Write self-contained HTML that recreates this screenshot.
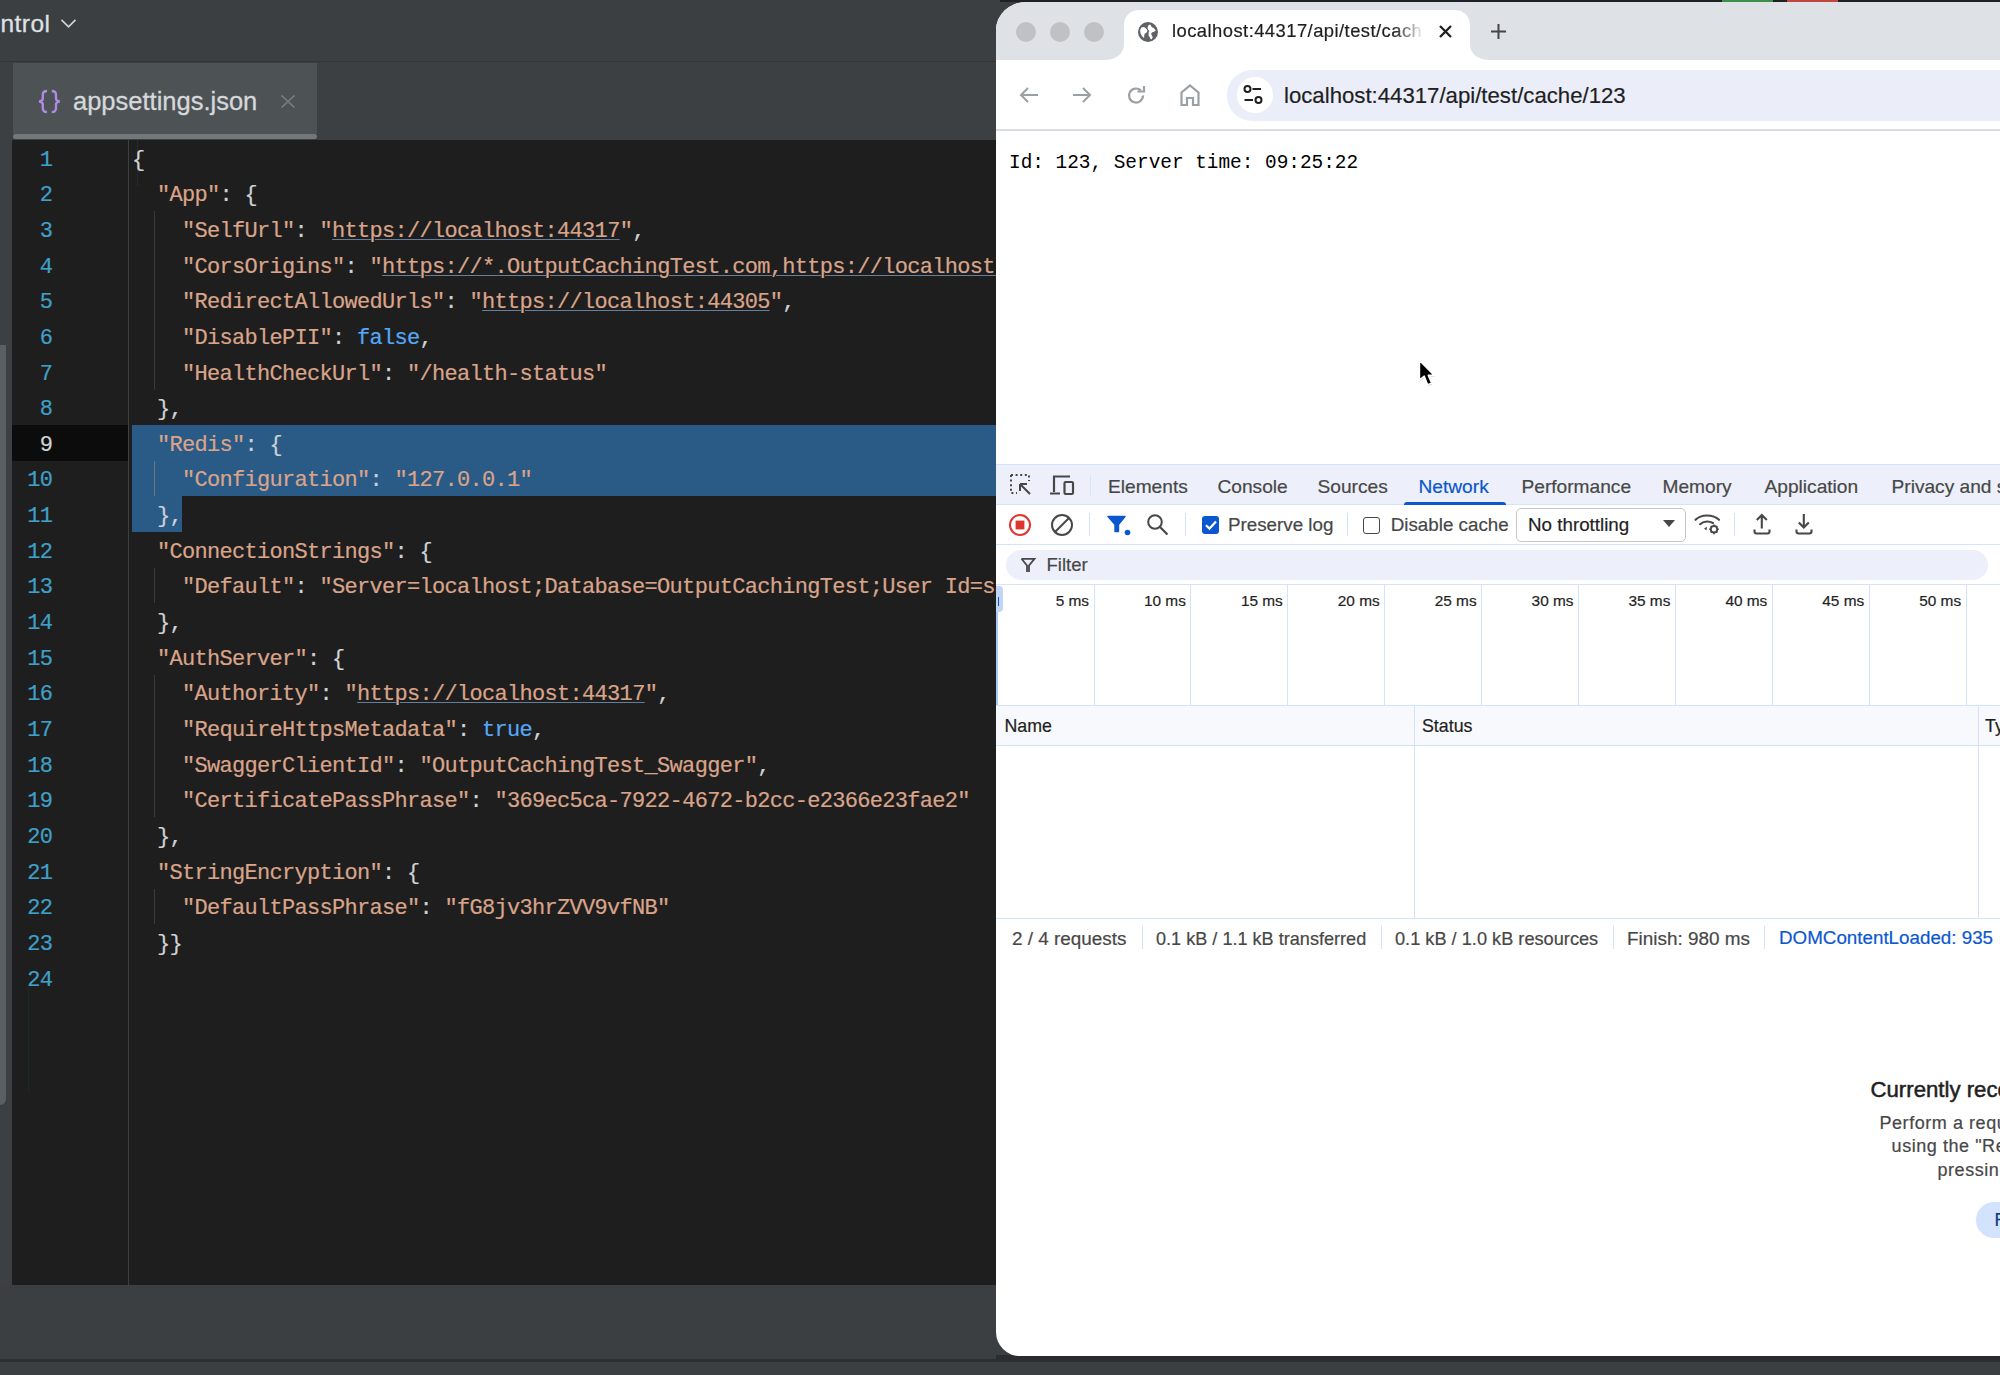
<!DOCTYPE html>
<html><head><meta charset="utf-8"><style>
*{margin:0;padding:0;box-sizing:border-box}
html,body{width:2000px;height:1375px;overflow:hidden;background:#3c3f41;position:relative;font-family:"Liberation Sans",sans-serif}
.a{position:absolute}
svg.a{overflow:visible}
.s{color:#d9a48a}
.u{text-decoration:underline;text-decoration-color:#62809e;text-decoration-thickness:1px;text-underline-offset:2px}
.k{color:#56a8f5}
</style></head><body>
<div class="a" style="left:0px;top:0px;width:1000px;height:61px;background:#3c3f41;"></div>
<div class="a" style="left:0px;top:61px;width:1000px;height:1px;background:#323436;"></div>
<div class="a" style="left:0.5px;top:8.31px;font-size:24.5px;line-height:32px;color:#dfe1e5;font-family:'Liberation Sans',sans-serif;white-space:pre;letter-spacing:0.45px;-webkit-text-stroke:0.3px #dfe1e5">ntrol</div>
<svg class="a" style="left:60px;top:18px" width="18" height="12"><path d="M1.5 1.8 L8.5 8.8 L15.5 1.8" fill="none" stroke="#cfd1d4" stroke-width="1.7"/></svg>
<div class="a" style="left:0px;top:62px;width:1000px;height:78px;background:#3d4042;"></div>
<div class="a" style="left:13px;top:63px;width:304px;height:71px;background:#4d5255;"></div>
<div class="a" style="left:13px;top:134px;width:304px;height:5px;background:#737779;border-radius:3px"></div>
<svg class="a" style="left:37px;top:89px" width="25" height="25" viewBox="0 0 25 25"><path d="M10 2 C6.8 2 5.8 3.2 5.8 5.8 L5.8 9.5 C5.8 11.3 4.6 12.3 2 12.5 C4.6 12.7 5.8 13.7 5.8 15.5 L5.8 19.2 C5.8 21.8 6.8 23 10 23 M14.8 2 C18 2 19 3.2 19 5.8 L19 9.5 C19 11.3 20.2 12.3 22.8 12.5 C20.2 12.7 19 13.7 19 15.5 L19 19.2 C19 21.8 18 23 14.8 23" fill="none" stroke="#b08ae6" stroke-width="2.3"/></svg>
<div class="a" style="left:73px;top:84.66px;font-size:25.5px;line-height:33px;color:#d6d8db;font-family:'Liberation Sans',sans-serif;white-space:pre;-webkit-text-stroke:0.3px #d6d8db">appsettings.json</div>
<svg class="a" style="left:280px;top:94px" width="16" height="15"><path d="M1.5 1.5 L14.5 13.5 M14.5 1.5 L1.5 13.5" stroke="#7d8184" stroke-width="1.5"/></svg>
<div class="a" style="left:0px;top:140px;width:12px;height:1145px;background:#3d4042;"></div>
<div class="a" style="left:0px;top:345px;width:6px;height:760px;background:#5b5e62;border-radius:0 0 6px 0"></div>
<div class="a" style="left:12px;top:140px;width:988px;height:1145px;background:#1e1e1e;"></div>
<div class="a" style="left:128px;top:140px;width:1px;height:1145px;background:#3e3f41;"></div>
<div class="a" style="left:12px;top:425.2px;width:116px;height:35.65px;background:#0c0c0d;"></div>
<div class="a" style="left:132px;top:425.2px;width:868px;height:71.3px;background:#295b86;"></div>
<div class="a" style="left:132px;top:495.5px;width:50px;height:36.65px;background:#295b86;"></div>
<div class="a" style="left:28px;top:987px;width:1px;height:106px;background:#1c282c;"></div>
<div class="a" style="left:137px;top:140.0px;width:1px;height:46.345px;background:#28292b;"></div>
<div class="a" style="left:154px;top:211.3px;width:1px;height:178.24999999999994px;background:#3a3b3d;"></div>
<div class="a" style="left:154px;top:460.84999999999997px;width:1px;height:35.650000000000034px;background:#6a7580;"></div>
<div class="a" style="left:154px;top:567.8px;width:1px;height:35.65000000000009px;background:#3a3b3d;"></div>
<div class="a" style="left:154px;top:674.75px;width:1px;height:142.60000000000002px;background:#3a3b3d;"></div>
<div class="a" style="left:154px;top:888.65px;width:1px;height:35.64999999999998px;background:#3a3b3d;"></div>
<div class="a" style="left:12px;top:145.64px;font-size:22px;line-height:29px;color:#3fa0c8;font-family:'Liberation Mono',monospace;white-space:pre;width:40.2px;text-align:right;letter-spacing:-0.7px;-webkit-text-stroke:0.2px #3fa0c8">1</div>
<div class="a" style="left:12px;top:181.29px;font-size:22px;line-height:29px;color:#3fa0c8;font-family:'Liberation Mono',monospace;white-space:pre;width:40.2px;text-align:right;letter-spacing:-0.7px;-webkit-text-stroke:0.2px #3fa0c8">2</div>
<div class="a" style="left:12px;top:216.94px;font-size:22px;line-height:29px;color:#3fa0c8;font-family:'Liberation Mono',monospace;white-space:pre;width:40.2px;text-align:right;letter-spacing:-0.7px;-webkit-text-stroke:0.2px #3fa0c8">3</div>
<div class="a" style="left:12px;top:252.59px;font-size:22px;line-height:29px;color:#3fa0c8;font-family:'Liberation Mono',monospace;white-space:pre;width:40.2px;text-align:right;letter-spacing:-0.7px;-webkit-text-stroke:0.2px #3fa0c8">4</div>
<div class="a" style="left:12px;top:288.24px;font-size:22px;line-height:29px;color:#3fa0c8;font-family:'Liberation Mono',monospace;white-space:pre;width:40.2px;text-align:right;letter-spacing:-0.7px;-webkit-text-stroke:0.2px #3fa0c8">5</div>
<div class="a" style="left:12px;top:323.89px;font-size:22px;line-height:29px;color:#3fa0c8;font-family:'Liberation Mono',monospace;white-space:pre;width:40.2px;text-align:right;letter-spacing:-0.7px;-webkit-text-stroke:0.2px #3fa0c8">6</div>
<div class="a" style="left:12px;top:359.54px;font-size:22px;line-height:29px;color:#3fa0c8;font-family:'Liberation Mono',monospace;white-space:pre;width:40.2px;text-align:right;letter-spacing:-0.7px;-webkit-text-stroke:0.2px #3fa0c8">7</div>
<div class="a" style="left:12px;top:395.19px;font-size:22px;line-height:29px;color:#3fa0c8;font-family:'Liberation Mono',monospace;white-space:pre;width:40.2px;text-align:right;letter-spacing:-0.7px;-webkit-text-stroke:0.2px #3fa0c8">8</div>
<div class="a" style="left:12px;top:430.84px;font-size:22px;line-height:29px;color:#d2d3d5;font-family:'Liberation Mono',monospace;white-space:pre;width:40.2px;text-align:right;letter-spacing:-0.7px;-webkit-text-stroke:0.2px #d2d3d5">9</div>
<div class="a" style="left:12px;top:466.49px;font-size:22px;line-height:29px;color:#3fa0c8;font-family:'Liberation Mono',monospace;white-space:pre;width:40.2px;text-align:right;letter-spacing:-0.7px;-webkit-text-stroke:0.2px #3fa0c8">10</div>
<div class="a" style="left:12px;top:502.14px;font-size:22px;line-height:29px;color:#3fa0c8;font-family:'Liberation Mono',monospace;white-space:pre;width:40.2px;text-align:right;letter-spacing:-0.7px;-webkit-text-stroke:0.2px #3fa0c8">11</div>
<div class="a" style="left:12px;top:537.79px;font-size:22px;line-height:29px;color:#3fa0c8;font-family:'Liberation Mono',monospace;white-space:pre;width:40.2px;text-align:right;letter-spacing:-0.7px;-webkit-text-stroke:0.2px #3fa0c8">12</div>
<div class="a" style="left:12px;top:573.44px;font-size:22px;line-height:29px;color:#3fa0c8;font-family:'Liberation Mono',monospace;white-space:pre;width:40.2px;text-align:right;letter-spacing:-0.7px;-webkit-text-stroke:0.2px #3fa0c8">13</div>
<div class="a" style="left:12px;top:609.09px;font-size:22px;line-height:29px;color:#3fa0c8;font-family:'Liberation Mono',monospace;white-space:pre;width:40.2px;text-align:right;letter-spacing:-0.7px;-webkit-text-stroke:0.2px #3fa0c8">14</div>
<div class="a" style="left:12px;top:644.74px;font-size:22px;line-height:29px;color:#3fa0c8;font-family:'Liberation Mono',monospace;white-space:pre;width:40.2px;text-align:right;letter-spacing:-0.7px;-webkit-text-stroke:0.2px #3fa0c8">15</div>
<div class="a" style="left:12px;top:680.39px;font-size:22px;line-height:29px;color:#3fa0c8;font-family:'Liberation Mono',monospace;white-space:pre;width:40.2px;text-align:right;letter-spacing:-0.7px;-webkit-text-stroke:0.2px #3fa0c8">16</div>
<div class="a" style="left:12px;top:716.04px;font-size:22px;line-height:29px;color:#3fa0c8;font-family:'Liberation Mono',monospace;white-space:pre;width:40.2px;text-align:right;letter-spacing:-0.7px;-webkit-text-stroke:0.2px #3fa0c8">17</div>
<div class="a" style="left:12px;top:751.69px;font-size:22px;line-height:29px;color:#3fa0c8;font-family:'Liberation Mono',monospace;white-space:pre;width:40.2px;text-align:right;letter-spacing:-0.7px;-webkit-text-stroke:0.2px #3fa0c8">18</div>
<div class="a" style="left:12px;top:787.34px;font-size:22px;line-height:29px;color:#3fa0c8;font-family:'Liberation Mono',monospace;white-space:pre;width:40.2px;text-align:right;letter-spacing:-0.7px;-webkit-text-stroke:0.2px #3fa0c8">19</div>
<div class="a" style="left:12px;top:822.99px;font-size:22px;line-height:29px;color:#3fa0c8;font-family:'Liberation Mono',monospace;white-space:pre;width:40.2px;text-align:right;letter-spacing:-0.7px;-webkit-text-stroke:0.2px #3fa0c8">20</div>
<div class="a" style="left:12px;top:858.64px;font-size:22px;line-height:29px;color:#3fa0c8;font-family:'Liberation Mono',monospace;white-space:pre;width:40.2px;text-align:right;letter-spacing:-0.7px;-webkit-text-stroke:0.2px #3fa0c8">21</div>
<div class="a" style="left:12px;top:894.29px;font-size:22px;line-height:29px;color:#3fa0c8;font-family:'Liberation Mono',monospace;white-space:pre;width:40.2px;text-align:right;letter-spacing:-0.7px;-webkit-text-stroke:0.2px #3fa0c8">22</div>
<div class="a" style="left:12px;top:929.94px;font-size:22px;line-height:29px;color:#3fa0c8;font-family:'Liberation Mono',monospace;white-space:pre;width:40.2px;text-align:right;letter-spacing:-0.7px;-webkit-text-stroke:0.2px #3fa0c8">23</div>
<div class="a" style="left:12px;top:965.59px;font-size:22px;line-height:29px;color:#3fa0c8;font-family:'Liberation Mono',monospace;white-space:pre;width:40.2px;text-align:right;letter-spacing:-0.7px;-webkit-text-stroke:0.2px #3fa0c8">24</div>
<div class="a" style="left:132px;top:145.64px;font-size:22px;line-height:29px;color:#d0d2d6;font-family:'Liberation Mono',monospace;white-space:pre;letter-spacing:-0.7px;-webkit-text-stroke:0.2px currentColor">{</div>
<div class="a" style="left:132px;top:181.29px;font-size:22px;line-height:29px;color:#d0d2d6;font-family:'Liberation Mono',monospace;white-space:pre;letter-spacing:-0.7px;-webkit-text-stroke:0.2px currentColor">  <span class="s">&quot;App&quot;</span>: {</div>
<div class="a" style="left:132px;top:216.94px;font-size:22px;line-height:29px;color:#d0d2d6;font-family:'Liberation Mono',monospace;white-space:pre;letter-spacing:-0.7px;-webkit-text-stroke:0.2px currentColor">    <span class="s">&quot;SelfUrl&quot;</span>: <span class="s">&quot;</span><span class="s u">https://localhost:44317</span><span class="s">&quot;</span>,</div>
<div class="a" style="left:132px;top:252.59px;font-size:22px;line-height:29px;color:#d0d2d6;font-family:'Liberation Mono',monospace;white-space:pre;letter-spacing:-0.7px;-webkit-text-stroke:0.2px currentColor">    <span class="s">&quot;CorsOrigins&quot;</span>: <span class="s">&quot;</span><span class="s u">https://*.OutputCachingTest.com,https://localhost:44305</span></div>
<div class="a" style="left:132px;top:288.24px;font-size:22px;line-height:29px;color:#d0d2d6;font-family:'Liberation Mono',monospace;white-space:pre;letter-spacing:-0.7px;-webkit-text-stroke:0.2px currentColor">    <span class="s">&quot;RedirectAllowedUrls&quot;</span>: <span class="s">&quot;</span><span class="s u">https://localhost:44305</span><span class="s">&quot;</span>,</div>
<div class="a" style="left:132px;top:323.89px;font-size:22px;line-height:29px;color:#d0d2d6;font-family:'Liberation Mono',monospace;white-space:pre;letter-spacing:-0.7px;-webkit-text-stroke:0.2px currentColor">    <span class="s">&quot;DisablePII&quot;</span>: <span class="k">false</span>,</div>
<div class="a" style="left:132px;top:359.54px;font-size:22px;line-height:29px;color:#d0d2d6;font-family:'Liberation Mono',monospace;white-space:pre;letter-spacing:-0.7px;-webkit-text-stroke:0.2px currentColor">    <span class="s">&quot;HealthCheckUrl&quot;</span>: <span class="s">&quot;/health-status&quot;</span></div>
<div class="a" style="left:132px;top:395.19px;font-size:22px;line-height:29px;color:#d0d2d6;font-family:'Liberation Mono',monospace;white-space:pre;letter-spacing:-0.7px;-webkit-text-stroke:0.2px currentColor">  },</div>
<div class="a" style="left:132px;top:430.84px;font-size:22px;line-height:29px;color:#d0d2d6;font-family:'Liberation Mono',monospace;white-space:pre;letter-spacing:-0.7px;-webkit-text-stroke:0.2px currentColor">  <span class="s">&quot;Redis&quot;</span>: {</div>
<div class="a" style="left:132px;top:466.49px;font-size:22px;line-height:29px;color:#d0d2d6;font-family:'Liberation Mono',monospace;white-space:pre;letter-spacing:-0.7px;-webkit-text-stroke:0.2px currentColor">    <span class="s">&quot;Configuration&quot;</span>: <span class="s">&quot;127.0.0.1&quot;</span></div>
<div class="a" style="left:132px;top:502.14px;font-size:22px;line-height:29px;color:#d0d2d6;font-family:'Liberation Mono',monospace;white-space:pre;letter-spacing:-0.7px;-webkit-text-stroke:0.2px currentColor">  },</div>
<div class="a" style="left:132px;top:537.79px;font-size:22px;line-height:29px;color:#d0d2d6;font-family:'Liberation Mono',monospace;white-space:pre;letter-spacing:-0.7px;-webkit-text-stroke:0.2px currentColor">  <span class="s">&quot;ConnectionStrings&quot;</span>: {</div>
<div class="a" style="left:132px;top:573.44px;font-size:22px;line-height:29px;color:#d0d2d6;font-family:'Liberation Mono',monospace;white-space:pre;letter-spacing:-0.7px;-webkit-text-stroke:0.2px currentColor">    <span class="s">&quot;Default&quot;</span>: <span class="s">&quot;Server=localhost;Database=OutputCachingTest;User Id=sa;Password=xx&quot;</span></div>
<div class="a" style="left:132px;top:609.09px;font-size:22px;line-height:29px;color:#d0d2d6;font-family:'Liberation Mono',monospace;white-space:pre;letter-spacing:-0.7px;-webkit-text-stroke:0.2px currentColor">  },</div>
<div class="a" style="left:132px;top:644.74px;font-size:22px;line-height:29px;color:#d0d2d6;font-family:'Liberation Mono',monospace;white-space:pre;letter-spacing:-0.7px;-webkit-text-stroke:0.2px currentColor">  <span class="s">&quot;AuthServer&quot;</span>: {</div>
<div class="a" style="left:132px;top:680.39px;font-size:22px;line-height:29px;color:#d0d2d6;font-family:'Liberation Mono',monospace;white-space:pre;letter-spacing:-0.7px;-webkit-text-stroke:0.2px currentColor">    <span class="s">&quot;Authority&quot;</span>: <span class="s">&quot;</span><span class="s u">https://localhost:44317</span><span class="s">&quot;</span>,</div>
<div class="a" style="left:132px;top:716.04px;font-size:22px;line-height:29px;color:#d0d2d6;font-family:'Liberation Mono',monospace;white-space:pre;letter-spacing:-0.7px;-webkit-text-stroke:0.2px currentColor">    <span class="s">&quot;RequireHttpsMetadata&quot;</span>: <span class="k">true</span>,</div>
<div class="a" style="left:132px;top:751.69px;font-size:22px;line-height:29px;color:#d0d2d6;font-family:'Liberation Mono',monospace;white-space:pre;letter-spacing:-0.7px;-webkit-text-stroke:0.2px currentColor">    <span class="s">&quot;SwaggerClientId&quot;</span>: <span class="s">&quot;OutputCachingTest_Swagger&quot;</span>,</div>
<div class="a" style="left:132px;top:787.34px;font-size:22px;line-height:29px;color:#d0d2d6;font-family:'Liberation Mono',monospace;white-space:pre;letter-spacing:-0.7px;-webkit-text-stroke:0.2px currentColor">    <span class="s">&quot;CertificatePassPhrase&quot;</span>: <span class="s">&quot;369ec5ca-7922-4672-b2cc-e2366e23fae2&quot;</span></div>
<div class="a" style="left:132px;top:822.99px;font-size:22px;line-height:29px;color:#d0d2d6;font-family:'Liberation Mono',monospace;white-space:pre;letter-spacing:-0.7px;-webkit-text-stroke:0.2px currentColor">  },</div>
<div class="a" style="left:132px;top:858.64px;font-size:22px;line-height:29px;color:#d0d2d6;font-family:'Liberation Mono',monospace;white-space:pre;letter-spacing:-0.7px;-webkit-text-stroke:0.2px currentColor">  <span class="s">&quot;StringEncryption&quot;</span>: {</div>
<div class="a" style="left:132px;top:894.29px;font-size:22px;line-height:29px;color:#d0d2d6;font-family:'Liberation Mono',monospace;white-space:pre;letter-spacing:-0.7px;-webkit-text-stroke:0.2px currentColor">    <span class="s">&quot;DefaultPassPhrase&quot;</span>: <span class="s">&quot;fG8jv3hrZVV9vfNB&quot;</span></div>
<div class="a" style="left:132px;top:929.94px;font-size:22px;line-height:29px;color:#d0d2d6;font-family:'Liberation Mono',monospace;white-space:pre;letter-spacing:-0.7px;-webkit-text-stroke:0.2px currentColor">  }}</div>
<div class="a" style="left:0px;top:1359px;width:2000px;height:3px;background:#2c2e31;"></div>
<div class="a" style="left:996px;top:1355px;width:1004px;height:5px;background:#2a2c2f;"></div>
<div class="a" style="left:1000px;top:0px;width:1000px;height:2px;background:#1f2023;"></div>
<div class="a" style="left:996px;top:2px;width:1004px;height:1354px;overflow:hidden;border-radius:30px 0 0 24px/28px 0 0 24px;background:#fff">
<div class="a" style="left:-996px;top:-2px;width:2000px;height:1375px">
<div class="a" style="left:996px;top:2px;width:1004px;height:58px;background:#dee1e6;"></div>
<div class="a" style="left:1015.8px;top:21.7px;width:20.4px;height:20.4px;border-radius:50%;background:#bfc1c5"></div>
<div class="a" style="left:1049.8px;top:21.7px;width:20.4px;height:20.4px;border-radius:50%;background:#bfc1c5"></div>
<div class="a" style="left:1083.8px;top:21.7px;width:20.4px;height:20.4px;border-radius:50%;background:#bfc1c5"></div>
<svg class="a" style="left:1104px;top:10px" width="386" height="50"><path d="M0 50 C12 50 20 44 20 34 L20 16 C20 6 26 0 36 0 L350 0 C360 0 366 6 366 16 L366 34 C366 44 374 50 386 50 Z" fill="#ffffff"/></svg>
<div class="a" style="left:996px;top:60px;width:1004px;height:70px;background:#ffffff;"></div>
<svg class="a" style="left:1137px;top:20.5px" width="22" height="22" viewBox="0 0 22 22"><circle cx="11" cy="11" r="10" fill="#5f6368"/><path d="M4.5 6.5 C7 5 8.5 7 10 8.5 C11 10 9.5 12 8 12.5 C7 13 7.5 15 7 17 C5 15.5 3.2 13 3.2 10 C3.2 8.5 3.7 7.4 4.5 6.5 Z M13 3.5 C14.5 4.5 14 6 15.5 6.5 C17 7 18 8 18.6 9.5 C17.8 11 16.5 10.8 15 11.5 C13.5 12.3 14.5 14.5 15.5 15.5 C16 16.5 15 18 14 18.5 C13 17 12.5 15.5 11.5 14.5 C12 12.5 11 11 12.5 10 C11 9 10 7 11 5 C11.5 4.2 12.2 3.7 13 3.5 Z" fill="#ffffff"/></svg>
<div class="a" style="left:1172px;top:18.82px;font-size:18.4px;line-height:24px;color:#1f1f1f;font-family:'Liberation Sans',sans-serif;white-space:pre;letter-spacing:0.45px;width:252px;overflow:hidden;-webkit-mask-image:linear-gradient(90deg,#000 0,#000 222px,rgba(0,0,0,0.08) 250px);-webkit-text-stroke:0.2px currentColor">localhost:44317/api/test/cach</div>
<svg class="a" style="left:1439px;top:25px" width="13" height="13"><path d="M1 1 L12 12 M12 1 L1 12" stroke="#1f1f1f" stroke-width="2.3"/></svg>
<svg class="a" style="left:1490px;top:23px" width="17" height="17"><path d="M8.5 1 L8.5 16 M1 8.5 L16 8.5" stroke="#444746" stroke-width="2"/></svg>
<svg class="a" style="left:1018px;top:85px" width="22" height="20"><path d="M20 10 L3 10 M10 3 L3 10 L10 17" fill="none" stroke="#9aa0a6" stroke-width="2"/></svg>
<svg class="a" style="left:1071px;top:85px" width="22" height="20"><path d="M2 10 L19 10 M12 3 L19 10 L12 17" fill="none" stroke="#9aa0a6" stroke-width="2"/></svg>
<svg class="a" style="left:1126px;top:85px" width="21" height="21" viewBox="0 0 21 21"><path d="M17 10.5 A7 7 0 1 1 14.8 5.4" fill="none" stroke="#9aa0a6" stroke-width="2.2"/><path d="M11.5 6.5 L18 6.5 L18 1" fill="none" stroke="#9aa0a6" stroke-width="2.2"/></svg>
<svg class="a" style="left:1180px;top:84px" width="20" height="22" viewBox="0 0 20 22"><path d="M1.5 21 L1.5 8.5 L10 1.5 L18.5 8.5 L18.5 21 L13 21 L13 14 L7 14 L7 21 Z" fill="none" stroke="#9aa0a6" stroke-width="2.2" stroke-linejoin="miter"/></svg>
<div class="a" style="left:1227px;top:70px;width:800px;height:50.5px;background:#ebeef9;border-radius:25px"></div>
<div class="a" style="left:1236.5px;top:77px;width:36px;height:36px;border-radius:50%;background:#fff"></div>
<svg class="a" style="left:1243px;top:85px" width="22" height="20" viewBox="0 0 22 20"><circle cx="4.5" cy="4" r="3" fill="none" stroke="#1f1f1f" stroke-width="2"/><path d="M9.5 4 L18 4" stroke="#1f1f1f" stroke-width="2"/><circle cx="15.5" cy="15" r="3" fill="none" stroke="#1f1f1f" stroke-width="2"/><path d="M1.5 15 L10 15" stroke="#1f1f1f" stroke-width="2"/></svg>
<div class="a" style="left:1284px;top:80.81px;font-size:22.2px;line-height:29px;color:#1f1f1f;font-family:'Liberation Sans',sans-serif;white-space:pre;;-webkit-text-stroke:0.2px currentColor">localhost:44317/api/test/cache/123</div>
<div class="a" style="left:996px;top:129px;width:1004px;height:1.5px;background:#d9dce1;"></div>
<div class="a" style="left:1009px;top:150.63px;font-size:19.4px;line-height:25px;color:#000000;font-family:'Liberation Mono',monospace;white-space:pre;">Id: 123, Server time: 09:25:22</div>
<svg class="a" style="left:1410px;top:355px" width="32" height="36" viewBox="0 0 32 36"><path d="M9.5 5.5 L9.5 25 L14.2 21 L17.6 29.6 L21.6 28.2 L18.2 20.3 L24 20.3 Z" fill="#888" opacity="0.3" transform="translate(0.8,1.5)"/><path d="M9.5 5.5 L9.5 25 L14.2 21 L17.6 29.6 L21.6 28.2 L18.2 20.3 L24 20.3 Z" fill="#000" stroke="#fff" stroke-width="1.4" stroke-linejoin="round"/></svg>
<div class="a" style="left:996px;top:464px;width:1004px;height:1px;background:#d3e3fd;"></div>
<div class="a" style="left:996px;top:465px;width:1004px;height:40px;background:#edf0fa;"></div>
<div class="a" style="left:996px;top:504px;width:1004px;height:1px;background:#d3e3fd;"></div>
<svg class="a" style="left:1009px;top:473px" width="24" height="24" viewBox="0 0 24 24"><path d="M2 2 H20 V8 M2 2 V20 H8" fill="none" stroke="#474747" stroke-width="2" stroke-dasharray="2 2.6"/><path d="M11 11 L21 21 M11 11 L11 18 M11 11 L18 11" fill="none" stroke="#474747" stroke-width="2"/></svg>
<svg class="a" style="left:1049px;top:475px" width="27" height="21" viewBox="0 0 27 21"><path d="M21 1.5 L5 1.5 L5 17 M1 18.5 L11 18.5" fill="none" stroke="#474747" stroke-width="2.2"/><rect x="15.5" y="7" width="8.5" height="12" rx="1.2" fill="none" stroke="#474747" stroke-width="2.2"/></svg>
<div class="a" style="left:1090px;top:476px;width:1px;height:20px;background:#d3e3fd;"></div>
<div class="a" style="left:1108.0px;top:474.16px;font-size:19.15px;line-height:25px;color:#474747;font-family:'Liberation Sans',sans-serif;white-space:pre;;-webkit-text-stroke:0.2px currentColor">Elements</div>
<div class="a" style="left:1217.5px;top:474.16px;font-size:19.15px;line-height:25px;color:#474747;font-family:'Liberation Sans',sans-serif;white-space:pre;;-webkit-text-stroke:0.2px currentColor">Console</div>
<div class="a" style="left:1317.5px;top:474.16px;font-size:19.15px;line-height:25px;color:#474747;font-family:'Liberation Sans',sans-serif;white-space:pre;;-webkit-text-stroke:0.2px currentColor">Sources</div>
<div class="a" style="left:1418.5px;top:474.16px;font-size:19.15px;line-height:25px;color:#0b57d0;font-family:'Liberation Sans',sans-serif;white-space:pre;;-webkit-text-stroke:0.2px currentColor">Network</div>
<div class="a" style="left:1521.5px;top:474.16px;font-size:19.15px;line-height:25px;color:#474747;font-family:'Liberation Sans',sans-serif;white-space:pre;;-webkit-text-stroke:0.2px currentColor">Performance</div>
<div class="a" style="left:1662.5px;top:474.16px;font-size:19.15px;line-height:25px;color:#474747;font-family:'Liberation Sans',sans-serif;white-space:pre;;-webkit-text-stroke:0.2px currentColor">Memory</div>
<div class="a" style="left:1764.5px;top:474.16px;font-size:19.15px;line-height:25px;color:#474747;font-family:'Liberation Sans',sans-serif;white-space:pre;;-webkit-text-stroke:0.2px currentColor">Application</div>
<div class="a" style="left:1891.5px;top:474.16px;font-size:19.15px;line-height:25px;color:#474747;font-family:'Liberation Sans',sans-serif;white-space:pre;;-webkit-text-stroke:0.2px currentColor">Privacy and security</div>
<div class="a" style="left:1403.5px;top:501.5px;width:102.5px;height:3.5px;background:#0b57d0;border-radius:3px 3px 0 0"></div>
<svg class="a" style="left:1008px;top:512.5px" width="24" height="24" viewBox="0 0 24 24"><circle cx="12" cy="12" r="10" fill="none" stroke="#dc362e" stroke-width="2"/><rect x="7.6" y="7.6" width="8.8" height="8.8" fill="#dc362e"/></svg>
<svg class="a" style="left:1050px;top:513px" width="24" height="24" viewBox="0 0 24 24"><circle cx="12" cy="12" r="10" fill="none" stroke="#474747" stroke-width="2"/><path d="M5 19 L19 5" stroke="#474747" stroke-width="2"/></svg>
<div class="a" style="left:1089px;top:513px;width:1px;height:23px;background:#d3e3fd;"></div>
<svg class="a" style="left:1106px;top:514px" width="26" height="24" viewBox="0 0 26 24"><path d="M2 2.5 L19 2.5 L12.5 10.5 L12.5 17.5 L9 17.5 L9 10.5 Z" fill="#0b57d0" stroke="#0b57d0" stroke-width="1.4" stroke-linejoin="round"/><circle cx="21.5" cy="18.5" r="2.8" fill="#0b57d0"/></svg>
<svg class="a" style="left:1146px;top:513px" width="24" height="24" viewBox="0 0 24 24"><circle cx="9" cy="9" r="6.8" fill="none" stroke="#474747" stroke-width="2"/><path d="M14 14 L21.5 21.5" stroke="#474747" stroke-width="2.2"/></svg>
<div class="a" style="left:1185px;top:513px;width:1px;height:23px;background:#d3e3fd;"></div>
<div class="a" style="left:1201.5px;top:516px;width:17.5px;height:17.5px;border-radius:3px;background:#0b57d0"></div>
<svg class="a" style="left:1201.5px;top:516px" width="18" height="18" viewBox="0 0 18 18"><path d="M4 9.2 L7.5 12.6 L14 5.6" fill="none" stroke="#fff" stroke-width="2.2"/></svg>
<div class="a" style="left:1228px;top:512.99px;font-size:18.8px;line-height:24px;color:#474747;font-family:'Liberation Sans',sans-serif;white-space:pre;;-webkit-text-stroke:0.2px currentColor">Preserve log</div>
<div class="a" style="left:1347px;top:513px;width:1px;height:23px;background:#d3e3fd;"></div>
<div class="a" style="left:1363px;top:516.5px;width:17px;height:17px;border-radius:3px;border:1.6px solid #474747;background:#fff"></div>
<div class="a" style="left:1390.7px;top:512.99px;font-size:18.8px;line-height:24px;color:#474747;font-family:'Liberation Sans',sans-serif;white-space:pre;;-webkit-text-stroke:0.2px currentColor">Disable cache</div>
<div class="a" style="left:1516px;top:507.5px;width:170px;height:34.5px;border-radius:5px;border:1.2px solid #c7c7c7;background:#fff"></div>
<div class="a" style="left:1528px;top:512.99px;font-size:18.8px;line-height:24px;color:#1f1f1f;font-family:'Liberation Sans',sans-serif;white-space:pre;;-webkit-text-stroke:0.2px currentColor">No throttling</div>
<svg class="a" style="left:1663px;top:520px" width="13" height="8"><path d="M0 0 L12 0 L6 7 Z" fill="#474747"/></svg>
<svg class="a" style="left:1690px;top:510px" width="40" height="30" viewBox="0 0 40 30"><path d="M5.5 9.8 C11 4 23 4 29 9.8" fill="none" stroke="#474747" stroke-width="2.1" stroke-linecap="round"/><path d="M10 14.2 C14 11 19 11 23 13" fill="none" stroke="#474747" stroke-width="2.1" stroke-linecap="round"/><path d="M14 18.5 L17 16.8 L16.5 20.5 Z" fill="#474747"/><circle cx="24" cy="19.3" r="3.3" fill="none" stroke="#474747" stroke-width="2"/><path d="M24 14.5 L24 16 M24 22.6 L24 24.2 M19.3 19.3 L20.8 19.3 M27.2 19.3 L28.7 19.3 M20.7 16 L21.7 17 M26.3 21.6 L27.3 22.6 M20.7 22.6 L21.7 21.6 M26.3 17 L27.3 16" stroke="#474747" stroke-width="1.6"/></svg>
<div class="a" style="left:1734px;top:513px;width:1px;height:23px;background:#d3e3fd;"></div>
<svg class="a" style="left:1750px;top:510px" width="24" height="28" viewBox="0 0 24 28"><path d="M11.8 18.5 L11.8 5 M6.8 10 L11.8 5 L16.8 10" fill="none" stroke="#474747" stroke-width="2.1"/><path d="M4.5 19.5 L4.5 21.5 Q4.5 23.5 6.5 23.5 L17.5 23.5 Q19.5 23.5 19.5 21.5 L19.5 19.5" fill="none" stroke="#474747" stroke-width="2.1"/></svg>
<svg class="a" style="left:1792px;top:510px" width="24" height="28" viewBox="0 0 24 28"><path d="M11.8 4 L11.8 17.5 M6.8 12.5 L11.8 17.5 L16.8 12.5" fill="none" stroke="#474747" stroke-width="2.1"/><path d="M4.5 19.5 L4.5 21.5 Q4.5 23.5 6.5 23.5 L17.5 23.5 Q19.5 23.5 19.5 21.5 L19.5 19.5" fill="none" stroke="#474747" stroke-width="2.1"/></svg>
<div class="a" style="left:996px;top:544px;width:1004px;height:1px;background:#d3e3fd;"></div>
<div class="a" style="left:1006px;top:550px;width:982px;height:29.5px;background:#edf0fa;border-radius:15px"></div>
<svg class="a" style="left:1020px;top:557px" width="16" height="16" viewBox="0 0 16 16"><path d="M1.5 1.8 L14.5 1.8 L9 8.5 L9 15 M1.5 1.8 L7 8.5 L7 15" fill="none" stroke="#474747" stroke-width="1.8"/></svg>
<div class="a" style="left:1046.5px;top:553.09px;font-size:18.5px;line-height:24px;color:#474747;font-family:'Liberation Sans',sans-serif;white-space:pre;;-webkit-text-stroke:0.2px currentColor">Filter</div>
<div class="a" style="left:996px;top:584px;width:1004px;height:1px;background:#d3e3fd;"></div>
<div class="a" style="left:1094px;top:585px;width:1px;height:120px;background:#d3e3fd;"></div>
<div class="a" style="left:889.0px;top:590.96px;font-size:15.4px;line-height:20px;color:#1f1f1f;font-family:'Liberation Sans',sans-serif;white-space:pre;width:200px;text-align:right;-webkit-text-stroke:0.2px currentColor">5 ms</div>
<div class="a" style="left:1190px;top:585px;width:1px;height:120px;background:#d3e3fd;"></div>
<div class="a" style="left:985.9000000000001px;top:590.96px;font-size:15.4px;line-height:20px;color:#1f1f1f;font-family:'Liberation Sans',sans-serif;white-space:pre;width:200px;text-align:right;-webkit-text-stroke:0.2px currentColor">10 ms</div>
<div class="a" style="left:1287px;top:585px;width:1px;height:120px;background:#d3e3fd;"></div>
<div class="a" style="left:1082.8px;top:590.96px;font-size:15.4px;line-height:20px;color:#1f1f1f;font-family:'Liberation Sans',sans-serif;white-space:pre;width:200px;text-align:right;-webkit-text-stroke:0.2px currentColor">15 ms</div>
<div class="a" style="left:1384px;top:585px;width:1px;height:120px;background:#d3e3fd;"></div>
<div class="a" style="left:1179.7px;top:590.96px;font-size:15.4px;line-height:20px;color:#1f1f1f;font-family:'Liberation Sans',sans-serif;white-space:pre;width:200px;text-align:right;-webkit-text-stroke:0.2px currentColor">20 ms</div>
<div class="a" style="left:1481px;top:585px;width:1px;height:120px;background:#d3e3fd;"></div>
<div class="a" style="left:1276.6px;top:590.96px;font-size:15.4px;line-height:20px;color:#1f1f1f;font-family:'Liberation Sans',sans-serif;white-space:pre;width:200px;text-align:right;-webkit-text-stroke:0.2px currentColor">25 ms</div>
<div class="a" style="left:1578px;top:585px;width:1px;height:120px;background:#d3e3fd;"></div>
<div class="a" style="left:1373.5px;top:590.96px;font-size:15.4px;line-height:20px;color:#1f1f1f;font-family:'Liberation Sans',sans-serif;white-space:pre;width:200px;text-align:right;-webkit-text-stroke:0.2px currentColor">30 ms</div>
<div class="a" style="left:1675px;top:585px;width:1px;height:120px;background:#d3e3fd;"></div>
<div class="a" style="left:1470.4px;top:590.96px;font-size:15.4px;line-height:20px;color:#1f1f1f;font-family:'Liberation Sans',sans-serif;white-space:pre;width:200px;text-align:right;-webkit-text-stroke:0.2px currentColor">35 ms</div>
<div class="a" style="left:1772px;top:585px;width:1px;height:120px;background:#d3e3fd;"></div>
<div class="a" style="left:1567.3000000000002px;top:590.96px;font-size:15.4px;line-height:20px;color:#1f1f1f;font-family:'Liberation Sans',sans-serif;white-space:pre;width:200px;text-align:right;-webkit-text-stroke:0.2px currentColor">40 ms</div>
<div class="a" style="left:1869px;top:585px;width:1px;height:120px;background:#d3e3fd;"></div>
<div class="a" style="left:1664.2px;top:590.96px;font-size:15.4px;line-height:20px;color:#1f1f1f;font-family:'Liberation Sans',sans-serif;white-space:pre;width:200px;text-align:right;-webkit-text-stroke:0.2px currentColor">45 ms</div>
<div class="a" style="left:1966px;top:585px;width:1px;height:120px;background:#d3e3fd;"></div>
<div class="a" style="left:1761.1px;top:590.96px;font-size:15.4px;line-height:20px;color:#1f1f1f;font-family:'Liberation Sans',sans-serif;white-space:pre;width:200px;text-align:right;-webkit-text-stroke:0.2px currentColor">50 ms</div>
<div class="a" style="left:996px;top:586px;width:7px;height:26px;background:#c2d5f5;border-radius:0 4px 4px 0"></div>
<div class="a" style="left:997.5px;top:597px;width:1.5px;height:9px;background:#0b57d0;"></div>
<div class="a" style="left:996px;top:612px;width:2px;height:93px;background:#a8c7fa;"></div>
<div class="a" style="left:996px;top:705px;width:1004px;height:1px;background:#d3e3fd;"></div>
<div class="a" style="left:996px;top:706px;width:1004px;height:39px;background:#f8f9fc;"></div>
<div class="a" style="left:996px;top:745px;width:1004px;height:1px;background:#d3e3fd;"></div>
<div class="a" style="left:1004.5px;top:715.33px;font-size:17.8px;line-height:23px;color:#1f1f1f;font-family:'Liberation Sans',sans-serif;white-space:pre;;-webkit-text-stroke:0.2px currentColor">Name</div>
<div class="a" style="left:1414px;top:706px;width:1px;height:212px;background:#d3e3fd;"></div>
<div class="a" style="left:1422px;top:715.33px;font-size:17.8px;line-height:23px;color:#1f1f1f;font-family:'Liberation Sans',sans-serif;white-space:pre;;-webkit-text-stroke:0.2px currentColor">Status</div>
<div class="a" style="left:1978px;top:706px;width:1px;height:212px;background:#d3e3fd;"></div>
<div class="a" style="left:1985px;top:715.33px;font-size:17.8px;line-height:23px;color:#1f1f1f;font-family:'Liberation Sans',sans-serif;white-space:pre;;-webkit-text-stroke:0.2px currentColor">Type</div>
<div class="a" style="left:996px;top:917.5px;width:1004px;height:1px;background:#d3e3fd;"></div>
<div class="a" style="left:1012px;top:925.95px;font-size:18.9px;line-height:25px;color:#474747;font-family:'Liberation Sans',sans-serif;white-space:pre;;-webkit-text-stroke:0.2px currentColor">2 / 4 requests</div>
<div class="a" style="left:1156px;top:926.73px;font-size:18.1px;line-height:24px;color:#474747;font-family:'Liberation Sans',sans-serif;white-space:pre;;-webkit-text-stroke:0.2px currentColor">0.1 kB / 1.1 kB transferred</div>
<div class="a" style="left:1395px;top:926.69px;font-size:18.2px;line-height:24px;color:#474747;font-family:'Liberation Sans',sans-serif;white-space:pre;;-webkit-text-stroke:0.2px currentColor">0.1 kB / 1.0 kB resources</div>
<div class="a" style="left:1627px;top:925.95px;font-size:18.9px;line-height:25px;color:#474747;font-family:'Liberation Sans',sans-serif;white-space:pre;;-webkit-text-stroke:0.2px currentColor">Finish: 980 ms</div>
<div class="a" style="left:1779px;top:926.49px;font-size:18.8px;line-height:24px;color:#0b57d0;font-family:'Liberation Sans',sans-serif;white-space:pre;;-webkit-text-stroke:0.2px currentColor">DOMContentLoaded: 935</div>
<div class="a" style="left:1141.5px;top:926px;width:1px;height:23px;background:#d3e3fd;"></div>
<div class="a" style="left:1381px;top:926px;width:1px;height:23px;background:#d3e3fd;"></div>
<div class="a" style="left:1613px;top:926px;width:1px;height:23px;background:#d3e3fd;"></div>
<div class="a" style="left:1764px;top:926px;width:1px;height:23px;background:#d3e3fd;"></div>
<div class="a" style="left:1870.5px;top:1074.61px;font-size:22.2px;line-height:29px;color:#1f1f1f;font-family:'Liberation Sans',sans-serif;white-space:pre;-webkit-text-stroke:0.5px #1f1f1f">Currently recording network activity</div>
<div class="a" style="left:1879.5px;top:1111.76px;font-size:18px;line-height:23px;color:#474747;font-family:'Liberation Sans',sans-serif;white-space:pre;letter-spacing:0.55px;-webkit-text-stroke:0.2px currentColor">Perform a request or reload the page</div>
<div class="a" style="left:1891.6px;top:1135.36px;font-size:18px;line-height:23px;color:#474747;font-family:'Liberation Sans',sans-serif;white-space:pre;letter-spacing:0.55px;-webkit-text-stroke:0.2px currentColor">using the &quot;Reload page&quot; button or by</div>
<div class="a" style="left:1937.5px;top:1158.96px;font-size:18px;line-height:23px;color:#474747;font-family:'Liberation Sans',sans-serif;white-space:pre;letter-spacing:0.55px;-webkit-text-stroke:0.2px currentColor">pressing Cmd R</div>
<div class="a" style="left:1976px;top:1202px;width:200px;height:35.5px;background:#d3e3fd;border-radius:18px"></div>
<div class="a" style="left:1994.6px;top:1208.66px;font-size:18px;line-height:23px;color:#0a3a78;font-family:'Liberation Sans',sans-serif;white-space:pre;;-webkit-text-stroke:0.2px currentColor">Reload page</div>
</div></div>
<div class="a" style="left:1722px;top:0px;width:51px;height:2px;background:#3f8f4c;"></div>
<div class="a" style="left:1787px;top:0px;width:51px;height:2px;background:#c0463f;"></div>
</body></html>
